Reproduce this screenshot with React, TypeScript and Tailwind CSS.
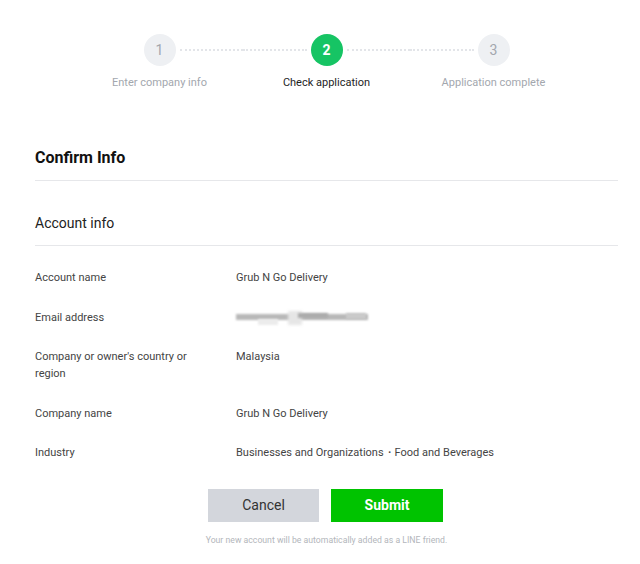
import React from "react";

const steps = [
  { n: "1", label: "Enter company info", active: false },
  { n: "2", label: "Check application", active: true },
  { n: "3", label: "Application complete", active: false },
];

function Dots({ show, side }: { show: boolean; side: "l" | "r" }) {
  return (
    <div
      className={
        "flex-1 h-0 border-t-2 border-dotted " +
        (side === "l" ? "mr-[4px] " : "ml-[4px] ") +
        (show ? "border-[#e3e5e9]" : "border-transparent")
      }
    />
  );
}

function Stepper() {
  return (
    <div className="mx-auto grid w-[501px] grid-cols-3">
      {steps.map((s, i) => (
        <div key={s.n} className="flex flex-col items-center">
          <div className="flex w-full items-center">
            <Dots show={i > 0} side="l" />
            <div
              className={
                "flex h-[32px] w-[32px] items-center justify-center rounded-full text-[14px] " +
                (s.active
                  ? "bg-[#16c464] font-bold text-white"
                  : "bg-[#eef0f3] text-[#a3a7ae]")
              }
            >
              {s.n}
            </div>
            <Dots show={i < steps.length - 1} side="r" />
          </div>
          <div
            className={
              "mt-[10px] text-[11px] leading-[14px] " +
              (s.active ? "text-[#1e1e1e]" : "text-[#a3a7ae]")
            }
          >
            {s.label}
          </div>
        </div>
      ))}
    </div>
  );
}

function BlurredEmail() {
  return (
    <div className="relative h-[17px] w-[134px]">
      <div className="absolute left-0 top-[5px] h-[6px] w-[132px] bg-[#b8b8b8] blur-[1px]" />
      <div className="absolute left-[22px] top-[10px] h-[6px] w-[20px] bg-[#ececec] blur-[1px]" />
      <div className="absolute left-[52px] top-[2px] h-[14px] w-[14px] bg-[#e6e6e6] blur-[1.5px]" />
      <div className="absolute left-[62px] top-[4px] h-[5px] w-[30px] bg-[#acacac] blur-[1px]" />
      <div className="absolute left-[110px] top-[4px] h-[6px] w-[20px] bg-[#cacaca] blur-[1px]" />
    </div>
  );
}

const rows: { label: string; value: React.ReactNode }[] = [
  { label: "Account name", value: "Grub N Go Delivery" },
  { label: "Email address", value: <BlurredEmail /> },
  { label: "Company or owner's country or region", value: "Malaysia" },
  { label: "Company name", value: "Grub N Go Delivery" },
  { label: "Industry", value: "Businesses and Organizations・Food and Beverages" },
];

export default function App() {
  return (
    <div
      className="min-h-[564px] bg-white pt-[34px] pl-[35px] pr-[22px] text-[#333]"
      style={{ fontFamily: "Roboto, 'Liberation Sans', sans-serif" }}
    >
      <Stepper />

      <h1 className="mt-[57px] border-b border-[#e6e7ea] pb-[11px] text-[16px] font-bold leading-[22px] text-[#111]">
        Confirm Info
      </h1>

      <h2 className="mt-[32px] border-b border-[#e6e7ea] pb-[12px] text-[14px] leading-[20px] text-[#222]">
        Account info
      </h2>

      <div className="pt-[12px]">
        {rows.map((r) => (
          <div key={r.label} className="flex py-[11.25px] text-[11px] leading-[17px] text-[#444]">
            <div className="w-[201px] shrink-0 pr-[40px]">{r.label}</div>
            <div className="flex-1">{r.value}</div>
          </div>
        ))}
      </div>

      <div className="mt-[16px] flex justify-center gap-[12px] pr-[2px]">
        <button className="h-[33px] w-[111px] bg-[#d3d6dc] text-[14px] text-[#333]">
          Cancel
        </button>
        <button className="h-[33px] w-[112px] bg-[#00c300] text-[14px] font-bold text-white">
          Submit
        </button>
      </div>

      <p className="mt-[12px] text-center text-[8.7px] leading-[12px] text-[#b3b6bb]">
        Your new account will be automatically added as a LINE friend.
      </p>
    </div>
  );
}
